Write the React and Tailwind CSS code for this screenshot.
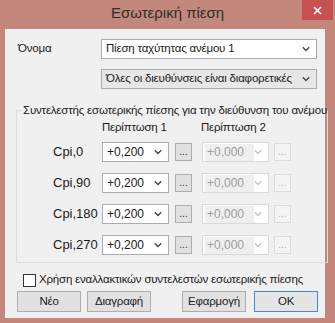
import React from "react";

const Chevron = ({ disabled }) => (
  <svg width="8" height="6" viewBox="0 0 8 6" className="shrink-0">
    <path
      d="M0.8 1.2 L4 4.4 L7.2 1.2"
      fill="none"
      stroke={disabled ? "#c4c4c4" : "#444"}
      strokeWidth="1.4"
    />
  </svg>
);

const Select = ({ value, className = "", tone = "white" }) => (
  <div
    className={`h-[20px] flex items-center justify-between pl-[4px] pr-[6px] border ${
      tone === "gray" ? "bg-[#e7e7e7] border-[#acacac]" : "bg-white border-[#abadb3]"
    } ${className}`}
  >
    <span className="text-[11.5px] tracking-[-0.2px] text-[#1b1b1b] leading-none whitespace-nowrap">{value}</span>
    <Chevron />
  </div>
);

const NumSelect = () => (
  <div className="w-[67px] h-[20px] flex items-center justify-between pl-[4px] pr-[6px] bg-white border border-[#abadb3]">
    <span className="text-[12px] text-[#1b1b1b] leading-none">+0,200</span>
    <Chevron />
  </div>
);

const Dots = ({ disabled }) => (
  <div
    className={`w-[17px] h-[18px] flex items-end justify-center pb-[3px] border text-[10px] leading-none ${
      disabled ? "bg-[#f4f4f4] border-[#dcdcdc] text-[#b0b0b0]" : "bg-[#e1e1e1] border-[#adadad] text-[#333]"
    }`}
  >
    ...
  </div>
);

const CpiRow = ({ label }) => (
  <div className="flex items-center h-[20px]">
    <span className="w-[49px] text-[13px] text-[#1b1b1b]">{label}</span>
    <NumSelect />
    <div className="ml-[6px]">
      <Dots />
    </div>
    <div className="ml-[10px] w-[67px] h-[20px] flex items-center justify-between pl-[2px] pr-[6px] bg-white border border-[#d9d9d9]">
      <span className="h-[17px] w-[50px] flex items-center pl-[2px] bg-[#efefef] text-[12px] text-[#9d9d9d] leading-none">
        +0,000
      </span>
      <Chevron disabled />
    </div>
    <div className="ml-[5px]">
      <Dots disabled />
    </div>
  </div>
);

const Btn = ({ children, primary, className = "" }) => (
  <button
    className={`w-[64px] h-[21px] flex items-center justify-center text-[11.5px] tracking-[-0.2px] text-[#1b1b1b] border ${
      primary ? "bg-[#e5e5e5] border-[#3c8bd9]" : "bg-[#e1e1e1] border-[#adadad]"
    } ${className}`}
  >
    {children}
  </button>
);

export default function App() {
  return (
    <div
      className="w-[335px] h-[323px] bg-[#c3877c] flex flex-col"
      style={{ fontFamily: "'Liberation Sans', Arial, sans-serif" }}
    >
      {/* Title bar */}
      <div className="relative h-[29px] flex items-center justify-center">
        <span className="text-[15px] text-[#2e2e2e] leading-none -mt-[4px]">Εσωτερική πίεση</span>
        <div className="absolute right-[2px] top-0 w-[31px] h-[20px] bg-[#c75050] flex items-center justify-center">
          <svg width="9" height="9" viewBox="0 0 9 9">
            <path d="M1 1 L8 8 M8 1 L1 8" stroke="#fff" strokeWidth="1.6" />
          </svg>
        </div>
      </div>

      {/* Client area */}
      <div className="ml-[5px] mr-[10px] mb-[5px] flex-1 bg-[#f0f0f0] flex flex-col">
        <div className="flex items-center mt-[10px] h-[20px]">
          <span className="w-[96px] pl-[13px] text-[11.5px] tracking-[-0.2px] text-[#1b1b1b]">Όνομα</span>
          <Select value="Πίεση ταχύτητας ανέμου 1" className="w-[216px]" />
        </div>
        <div className="flex mt-[10px] pl-[96px]">
          <Select value="Όλες οι διευθύνσεις είναι διαφορετικές" className="w-[216px]" tone="gray" />
        </div>

        <fieldset className="ml-[11px] w-[304px] mt-[13px] border border-[#dcdcdc] pl-[36px] pb-[7px]">
          <legend className="-ml-[31px] pl-[1px] text-[11.5px] tracking-[-0.2px] text-[#1b1b1b] leading-[16px] whitespace-nowrap">
            Συντελεστής εσωτερικής πίεσης για την διεύθυνση του ανέμου
          </legend>
          <div className="flex text-[11.5px] tracking-[-0.2px] text-[#1b1b1b] h-[16px] items-center mt-[2px]">
            <span className="ml-[49px] w-[99px]">Περίπτωση 1</span>
            <span>Περίπτωση 2</span>
          </div>
          <div className="flex flex-col gap-[11px] mt-[6px]">
            <CpiRow label="Cpi,0" />
            <CpiRow label="Cpi,90" />
            <CpiRow label="Cpi,180" />
            <CpiRow label="Cpi,270" />
          </div>
        </fieldset>

        <div className="flex items-center mt-[10px] ml-[18px] h-[14px]">
          <span className="w-[13px] h-[13px] bg-white border border-[#333]" />
          <span className="ml-[3px] text-[11.5px] tracking-[-0.2px] text-[#1b1b1b] whitespace-nowrap">
            Χρήση εναλλακτικών συντελεστών εσωτερικής πίεσης
          </span>
        </div>

        <div className="flex mt-[4px] ml-[12px]">
          <Btn>Νέο</Btn>
          <Btn className="ml-[6px]">Διαγραφή</Btn>
          <Btn className="ml-[31px]">Εφαρμογή</Btn>
          <Btn primary className="ml-[8px]">OK</Btn>
        </div>
      </div>
    </div>
  );
}
